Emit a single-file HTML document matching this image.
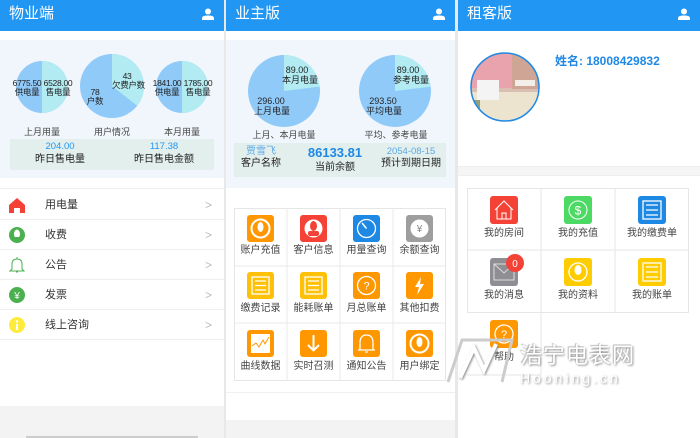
<!DOCTYPE html>
<html><head><meta charset="utf-8"><style>
*{margin:0;padding:0;box-sizing:border-box}
body{width:700px;height:438px;overflow:hidden;background:#fff;position:relative;font-family:"Liberation Sans","Noto Sans CJK SC",sans-serif;color:#333}
.a{position:absolute}
.hd{background:#2196F3;height:31px;top:0;color:#fff;font-size:15px;line-height:28px;padding-left:9px}
.t{position:absolute;font-size:9px;color:#222;text-align:center;line-height:10px;white-space:nowrap}
.p{font-size:8.5px;line-height:9px;letter-spacing:-0.3px}
.menu{position:absolute;left:0;width:224px;height:30px;border-bottom:1px solid #eee;font-size:11px;line-height:30px}
.menu span.l{position:absolute;left:45px}
.menu span.r{position:absolute;right:12px;color:#bbb;font-size:12px}
</style></head><body>
<div class="a" style="left:224px;top:0;width:2px;height:438px;background:#e8e8e8"></div>
<div class="a" style="left:455px;top:0;width:3px;height:438px;background:#e8e8e8"></div>

<!-- PANEL 1 -->
<div class="a hd" style="left:0;width:224px">物业端<svg class="a" style="right:10px;top:8px" width="12" height="12" viewBox="0 0 12 12"><circle cx="6" cy="3.5" r="3" fill="#fff"/><path d="M0 12 V10 Q0 7.5 6 7.5 Q12 7.5 12 10 V12Z" fill="#fff"/></svg></div>
<div class="a" style="left:0;top:40px;width:224px;height:138px;background:#f1f6fc"></div>
<svg class="a" style="left:0;top:0" width="224" height="180">
<circle cx="42" cy="87" r="26" fill="#90CAF9"/><path d="M42 61 A26 26 0 0 1 42 113Z" fill="#B2EBF2"/>
<circle cx="112" cy="86" r="32" fill="#90CAF9"/><path d="M112 86 L112 54 A32 32 0 0 1 137.2 105.7Z" fill="#B2EBF2"/>
<circle cx="182" cy="87" r="26" fill="#90CAF9"/><path d="M182 61 A26 26 0 0 1 182 113Z" fill="#B2EBF2"/>
</svg>
<div class="t p" style="left:12px;top:79px;width:30px">6775.50<br>供电量</div>
<div class="t p" style="left:43px;top:79px;width:30px">6528.00<br>售电量</div>
<div class="t p" style="left:112px;top:72px;width:30px">43<br>欠费户数</div>
<div class="t p" style="left:85px;top:88px;width:20px">78<br>户数</div>
<div class="t p" style="left:152px;top:79px;width:30px">1841.00<br>供电量</div>
<div class="t p" style="left:183px;top:79px;width:30px">1785.00<br>售电量</div>
<div class="t" style="left:22px;top:127px;width:40px;color:#444">上月用量</div>
<div class="t" style="left:92px;top:127px;width:40px;color:#444">用户情况</div>
<div class="t" style="left:162px;top:127px;width:40px;color:#444">本月用量</div>
<div class="a" style="left:10px;top:139px;width:204px;height:31px;background:#e3efed"></div>
<div class="t" style="left:20px;top:142px;width:80px;color:#2196F3;font-size:9.5px">204.00</div>
<div class="t" style="left:20px;top:155px;width:80px;font-size:10px">昨日售电量</div>
<div class="t" style="left:124px;top:142px;width:80px;color:#2196F3;font-size:9.5px">117.38</div>
<div class="t" style="left:124px;top:155px;width:80px;font-size:10px">昨日售电金额</div>
<div class="a" style="left:0;top:188px;width:224px;height:1px;background:#eee"></div>
<div class="menu" style="top:190px"><svg class="a" style="left:9px;top:7px" width="16" height="16" viewBox="0 0 16 16"><path d="M8 1 L16 8 V16 H11 V11 H5 V16 H0 V8Z" fill="#f44336"/></svg><span class="l">用电量</span><span class="r">&gt;</span></div>
<div class="menu" style="top:220px"><svg class="a" style="left:9px;top:7px" width="16" height="16"><circle cx="8" cy="8" r="8" fill="#4CAF50"/><ellipse cx="8" cy="7" rx="3" ry="4.5" fill="#fff"/><rect x="6" y="10" width="4" height="4" fill="#4CAF50"/></svg><span class="l">收费</span><span class="r">&gt;</span></div>
<div class="menu" style="top:250px"><svg class="a" style="left:9px;top:6px" width="16" height="18"><path d="M3 13 V8 Q3 3 8 3 Q13 3 13 8 V13 L15 15 H1Z M8 1 V3 M7 16 H9" fill="none" stroke="#4CAF50" stroke-width="1"/></svg><span class="l">公告</span><span class="r">&gt;</span></div>
<div class="menu" style="top:280px"><svg class="a" style="left:9px;top:7px" width="16" height="16"><circle cx="8" cy="8" r="8" fill="#4CAF50"/><text x="8" y="12" font-size="10" fill="#fff" text-anchor="middle" font-family="Liberation Sans">¥</text></svg><span class="l">发票</span><span class="r">&gt;</span></div>
<div class="menu" style="top:310px"><svg class="a" style="left:9px;top:7px" width="16" height="16"><circle cx="8" cy="8" r="8" fill="#FFEB3B"/><rect x="7" y="7" width="2" height="6" fill="#fff"/><circle cx="8" cy="4.5" r="1.2" fill="#fff"/></svg><span class="l">线上咨询</span><span class="r">&gt;</span></div>
<div class="a" style="left:0;top:406px;width:224px;height:32px;background:#f3f3f3"></div>
<div class="a" style="left:26px;top:436px;width:172px;height:2px;background:#ccc"></div>

<!-- PANEL 2 -->
<div class="a hd" style="left:226px;width:229px">业主版<svg class="a" style="right:10px;top:8px" width="12" height="12" viewBox="0 0 12 12"><circle cx="6" cy="3.5" r="3" fill="#fff"/><path d="M0 12 V10 Q0 7.5 6 7.5 Q12 7.5 12 10 V12Z" fill="#fff"/></svg></div>
<div class="a" style="left:226px;top:40px;width:229px;height:148px;background:#f1f6fc"></div>
<svg class="a" style="left:0;top:0" width="455" height="190">
<circle cx="284" cy="91" r="36" fill="#90CAF9"/><path d="M284 91 L284 55 A36 36 0 0 1 319.7 86.6Z" fill="#B2EBF2"/>
<circle cx="395" cy="91" r="36" fill="#90CAF9"/><path d="M395 91 L395 55 A36 36 0 0 1 430.7 86.6Z" fill="#B2EBF2"/>
</svg>
<div class="t" style="left:282px;top:65px;width:30px">89.00<br>本月电量</div>
<div class="t" style="left:254px;top:96px;width:34px">296.00<br>上月电量</div>
<div class="t" style="left:393px;top:65px;width:30px">89.00<br>参考电量</div>
<div class="t" style="left:366px;top:96px;width:34px">293.50<br>平均电量</div>
<div class="t" style="left:252px;top:130px;width:64px;color:#444">上月、本月电量</div>
<div class="t" style="left:364px;top:130px;width:64px;color:#444">平均、参考电量</div>
<div class="a" style="left:234px;top:143px;width:212px;height:34px;background:#e3efed"></div>
<div class="t" style="left:236px;top:147px;width:50px;color:#5aa9e6;font-size:10px">贾雪飞</div>
<div class="t" style="left:236px;top:159px;width:50px;font-size:10px">客户名称</div>
<div class="t" style="left:300px;top:146px;width:70px;color:#1E88E5;font-size:13px;font-weight:bold;line-height:14px">86133.81</div>
<div class="t" style="left:300px;top:163px;width:70px;font-size:10px">当前余额</div>
<div class="t" style="left:378px;top:147px;width:66px;color:#5aa9e6;font-size:9.5px">2054-08-15</div>
<div class="t" style="left:378px;top:159px;width:66px;font-size:10px">预计到期日期</div>

<div class="a" style="left:234px;top:208px;width:212px;height:173px;border:1px solid #e6e6e6"></div>
<svg class="a" style="left:0;top:0" width="455" height="400">
<g stroke="#e8e8e8" stroke-width="1"><line x1="287" y1="208" x2="287" y2="381"/><line x1="340" y1="208" x2="340" y2="381"/><line x1="393" y1="208" x2="393" y2="381"/><line x1="234" y1="266" x2="446" y2="266"/><line x1="234" y1="323" x2="446" y2="323"/></g>
<rect x="247" y="215" width="27" height="27" rx="3" fill="#FF9800"/><circle cx="260.5" cy="228.5" r="9" fill="none" stroke="#fff" stroke-width="2"/><ellipse cx="260.5" cy="227" rx="3" ry="5" fill="#fff"/>
<rect x="300" y="215" width="27" height="27" rx="3" fill="#f44336"/><circle cx="313.5" cy="228.5" r="9" fill="#fff"/><ellipse cx="313.5" cy="226" rx="3.5" ry="5" fill="#f44336"/><rect x="308" y="231" width="11" height="5" rx="2" fill="#f44336"/>
<rect x="353" y="215" width="27" height="27" rx="3" fill="#1E88E5"/><circle cx="366.5" cy="228.5" r="9" fill="none" stroke="#fff" stroke-width="1.3"/><path d="M366.5 228.5 L362 223" stroke="#fff" stroke-width="1.5"/>
<rect x="406" y="215" width="27" height="27" rx="3" fill="#9E9E9E"/><circle cx="419.5" cy="228.5" r="9" fill="#fff"/><text x="419.5" y="232" font-size="10" text-anchor="middle" fill="#888" font-family="Liberation Sans">¥</text>
<rect x="247" y="272" width="27" height="27" rx="3" fill="#FFC107"/><rect x="252" y="277" width="17" height="17" fill="none" stroke="#fff" stroke-width="1.3"/><path d="M255 281h11M255 285.5h11M255 290h11" stroke="#fff" stroke-width="1.3"/>
<rect x="300" y="272" width="27" height="27" rx="3" fill="#FFC107"/><rect x="305" y="277" width="17" height="17" fill="none" stroke="#fff" stroke-width="1.3"/><path d="M308 281h11M308 285.5h11M308 290h11" stroke="#fff" stroke-width="1.3"/>
<rect x="353" y="272" width="27" height="27" rx="3" fill="#FF9800"/><circle cx="366.5" cy="285.5" r="9" fill="none" stroke="#fff" stroke-width="1.3"/><text x="366.5" y="289.5" font-size="11" text-anchor="middle" fill="#fff" font-family="Liberation Sans">?</text>
<rect x="406" y="272" width="27" height="27" rx="3" fill="#FF9800"/><path d="M421 277 L415 287 H419 L417 295 L424 284 H420Z" fill="#fff"/>
<rect x="247" y="330" width="27" height="27" rx="3" fill="#FF9800"/><rect x="251" y="334" width="19" height="19" fill="#fff"/><path d="M252 346 L256 343 L259 347 L263 340 L265 344 L269 337" fill="none" stroke="#FF9800" stroke-width="1"/>
<rect x="300" y="330" width="27" height="27" rx="3" fill="#FF9800"/><path d="M313.5 335 V350 M308 345 L313.5 350.5 L319 345" fill="none" stroke="#fff" stroke-width="2"/>
<rect x="353" y="330" width="27" height="27" rx="3" fill="#FF9800"/><path d="M360 350 V343 Q360 335 366.5 335 Q373 335 373 343 V350Z M358 350H375 M365 352H368" fill="none" stroke="#fff" stroke-width="1.3"/>
<rect x="406" y="330" width="27" height="27" rx="3" fill="#FF9800"/><circle cx="419.5" cy="343.5" r="9" fill="none" stroke="#fff" stroke-width="2"/><ellipse cx="419.5" cy="342" rx="3" ry="5" fill="#fff"/>
</svg>
<div class="t" style="left:234px;top:246px;width:53px;font-size:10px;color:#444">账户充值</div>
<div class="t" style="left:287px;top:246px;width:53px;font-size:10px;color:#444">客户信息</div>
<div class="t" style="left:340px;top:246px;width:53px;font-size:10px;color:#444">用量查询</div>
<div class="t" style="left:393px;top:246px;width:53px;font-size:10px;color:#444">余额查询</div>
<div class="t" style="left:234px;top:304px;width:53px;font-size:10px;color:#444">缴费记录</div>
<div class="t" style="left:287px;top:304px;width:53px;font-size:10px;color:#444">能耗账单</div>
<div class="t" style="left:340px;top:304px;width:53px;font-size:10px;color:#444">月总账单</div>
<div class="t" style="left:393px;top:304px;width:53px;font-size:10px;color:#444">其他扣费</div>
<div class="t" style="left:234px;top:362px;width:53px;font-size:10px;color:#444">曲线数据</div>
<div class="t" style="left:287px;top:362px;width:53px;font-size:10px;color:#444">实时召测</div>
<div class="t" style="left:340px;top:362px;width:53px;font-size:10px;color:#444">通知公告</div>
<div class="t" style="left:393px;top:362px;width:53px;font-size:10px;color:#444">用户绑定</div>
<div class="a" style="left:226px;top:392px;width:229px;height:1px;background:#f0f0f0"></div>
<div class="a" style="left:226px;top:420px;width:229px;height:18px;background:#f3f3f3"></div>

<!-- PANEL 3 -->
<div class="a hd" style="left:458px;width:242px">租客版<svg class="a" style="right:10px;top:8px" width="12" height="12" viewBox="0 0 12 12"><circle cx="6" cy="3.5" r="3" fill="#fff"/><path d="M0 12 V10 Q0 7.5 6 7.5 Q12 7.5 12 10 V12Z" fill="#fff"/></svg></div>
<svg class="a" style="left:0;top:0" width="700" height="438">
<defs><clipPath id="av"><circle cx="505" cy="87" r="34"/></clipPath></defs>
<g clip-path="url(#av)">
<rect x="470" y="52" width="70" height="70" fill="#d9bfb2"/>
<rect x="470" y="52" width="42" height="36" fill="#e8a3ad"/>
<rect x="512" y="55" width="28" height="34" fill="#cfa595"/>
<rect x="470" y="92" width="70" height="32" fill="#ece4cf"/>
<rect x="477" y="80" width="22" height="20" fill="#f4f4f4"/>
<rect x="470" y="100" width="10" height="14" fill="#8fa07a"/>
<rect x="515" y="80" width="20" height="6" fill="#f3eee7"/>
</g>
<circle cx="505" cy="87" r="34" fill="none" stroke="#1E88E5" stroke-width="1.5"/>
<g stroke="#e6e6e6" stroke-width="1" fill="none">
<rect x="467.5" y="188.5" width="221" height="124"/>
<line x1="541" y1="188" x2="541" y2="375"/><line x1="615" y1="188" x2="615" y2="312"/>
<line x1="467" y1="250" x2="689" y2="250"/><line x1="467" y1="375" x2="541" y2="375"/>
</g>
<rect x="490" y="196" width="28" height="28" rx="3" fill="#f44336"/><path d="M495 210 L504 201 L513 210 M497 208 V219 H511 V208 M502 219 V213 H506 V219" fill="none" stroke="#fff" stroke-width="1"/>
<rect x="564" y="196" width="28" height="28" rx="3" fill="#4CD964"/><circle cx="578" cy="210" r="9" fill="none" stroke="#fff" stroke-width="1"/><text x="578" y="214.5" font-size="12" text-anchor="middle" fill="#fff" font-family="Liberation Sans">$</text>
<rect x="638" y="196" width="28" height="28" rx="3" fill="#1E88E5"/><rect x="643" y="201" width="18" height="18" fill="none" stroke="#fff" stroke-width="1.3"/><path d="M646 205h12M646 210h12M646 215h12" stroke="#fff" stroke-width="1.3"/>
<rect x="490" y="258" width="28" height="28" rx="3" fill="#8e8e93"/><path d="M494 264 H514 V280 H494Z M494 264 L504 273 L514 264" fill="none" stroke="#ddd" stroke-width="1"/>
<circle cx="515" cy="263" r="9" fill="#f44336"/><text x="515" y="267" font-size="10" text-anchor="middle" fill="#fff" font-family="Liberation Sans">0</text>
<rect x="564" y="258" width="28" height="28" rx="3" fill="#FFCC00"/><circle cx="578" cy="272" r="9" fill="none" stroke="#fff" stroke-width="1.3"/><ellipse cx="578" cy="270" rx="3.5" ry="5" fill="#fff"/>
<rect x="638" y="258" width="28" height="28" rx="3" fill="#FFCC00"/><rect x="643" y="263" width="18" height="18" fill="none" stroke="#fff" stroke-width="1.3"/><path d="M646 267h12M646 272h12M646 277h12" stroke="#fff" stroke-width="1.3"/>
<rect x="490" y="320" width="28" height="28" rx="3" fill="#FF9800"/><circle cx="504" cy="334" r="9" fill="none" stroke="#fff" stroke-width="1.3"/><text x="504" y="338" font-size="11" text-anchor="middle" fill="#fff" font-family="Liberation Sans">?</text>
</svg>
<div class="a" style="left:555px;top:52px;font-size:12px;font-weight:bold;color:#1E88E5">姓名: 18008429832</div>
<div class="a" style="left:458px;top:166px;width:242px;height:10px;background:#f5f5f5;border-top:1px solid #eee;border-bottom:1px solid #eee"></div>
<div class="t" style="left:467px;top:229px;width:74px;font-size:10px;color:#444">我的房间</div>
<div class="t" style="left:541px;top:229px;width:74px;font-size:10px;color:#444">我的充值</div>
<div class="t" style="left:615px;top:229px;width:74px;font-size:10px;color:#444">我的缴费单</div>
<div class="t" style="left:467px;top:291px;width:74px;font-size:10px;color:#444">我的消息</div>
<div class="t" style="left:541px;top:291px;width:74px;font-size:10px;color:#444">我的资料</div>
<div class="t" style="left:615px;top:291px;width:74px;font-size:10px;color:#444">我的账单</div>
<div class="t" style="left:467px;top:353px;width:74px;font-size:10px;color:#444">帮助</div>

<div class="a" style="left:520px;top:338px;font-size:22px;color:#fff;letter-spacing:1px;text-shadow:1px 1px 2px #888,-1px -1px 1px #bbb;font-family:'Noto Sans CJK SC',sans-serif;white-space:nowrap">浩宁电表网</div>
<div class="a" style="left:520px;top:370px;font-size:14px;color:#fff;letter-spacing:3px;text-shadow:1px 1px 2px #888">Hooning.cn</div>
<svg class="a" style="left:440px;top:330px" width="80" height="60"><path d="M8 52 L22 10 H72 L62 52" fill="none" stroke="#ccc" stroke-width="3"/><path d="M20 48 L34 18 L44 40 L56 14" fill="none" stroke="#fff" stroke-width="4" style="filter:drop-shadow(1px 1px 1px #888)"/></svg>
</body></html>
